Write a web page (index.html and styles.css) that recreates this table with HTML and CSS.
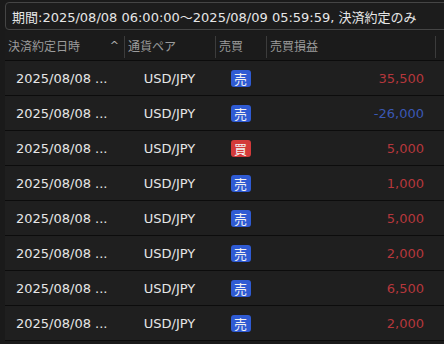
FILE: index.html
```html
<!DOCTYPE html>
<html lang="ja">
<head>
<meta charset="utf-8">
<link rel="stylesheet" href="styles.css">
</head>
<body>
<div class="filter">期間:2025/08/08 06:00:00～2025/08/09 05:59:59, 決済約定のみ</div>
<div class="table">
  <div class="row head">
    <div class="c c1"><span>決済約定日時</span><span class="sort">^</span></div>
    <div class="c c2">通貨ペア</div>
    <div class="c c3">売買</div>
    <div class="c c4">売買損益</div>
    <div class="c c5"></div>
  </div>
  <div class="row"><div class="c c1">2025/08/08 ...</div><div class="c c2">USD/JPY</div><div class="c c3"><span class="badge sell">売</span></div><div class="c c4 pos">35,500</div></div>
  <div class="row"><div class="c c1">2025/08/08 ...</div><div class="c c2">USD/JPY</div><div class="c c3"><span class="badge sell">売</span></div><div class="c c4 neg">-26,000</div></div>
  <div class="row"><div class="c c1">2025/08/08 ...</div><div class="c c2">USD/JPY</div><div class="c c3"><span class="badge buy">買</span></div><div class="c c4 pos">5,000</div></div>
  <div class="row"><div class="c c1">2025/08/08 ...</div><div class="c c2">USD/JPY</div><div class="c c3"><span class="badge sell">売</span></div><div class="c c4 pos">1,000</div></div>
  <div class="row"><div class="c c1">2025/08/08 ...</div><div class="c c2">USD/JPY</div><div class="c c3"><span class="badge sell">売</span></div><div class="c c4 pos">5,000</div></div>
  <div class="row"><div class="c c1">2025/08/08 ...</div><div class="c c2">USD/JPY</div><div class="c c3"><span class="badge sell">売</span></div><div class="c c4 pos">2,000</div></div>
  <div class="row"><div class="c c1">2025/08/08 ...</div><div class="c c2">USD/JPY</div><div class="c c3"><span class="badge sell">売</span></div><div class="c c4 pos">6,500</div></div>
  <div class="row"><div class="c c1">2025/08/08 ...</div><div class="c c2">USD/JPY</div><div class="c c3"><span class="badge sell">売</span></div><div class="c c4 pos">2,000</div></div>
</div>
</body>
</html>
```
FILE: styles.css
```css
html, body {
  margin: 0;
  padding: 0;
  background: #1a1a1a;
  overflow: hidden;
}
body {
  font-family: "DejaVu Sans", "Noto Sans CJK JP", sans-serif;
  font-size: 13px;
  color: #e6e6e6;
  width: 444px;
  height: 344px;
}
.filter {
  margin: 2px -10px 0 5px;
  height: 26px;
  border: 1px solid #454545;
  border-radius: 4px;
  background: #1c1c1c;
  padding-left: 6px;
  display: flex;
  align-items: center;
  white-space: nowrap;
}
.table {
  margin-left: 5px;
  margin-top: 1px;
}
.row {
  display: flex;
  height: 34px;
  align-items: center;
  border-bottom: 1px solid #0c0c0c;
  background: #1f1f1f;
  white-space: nowrap;
}
.row.head {
  height: 29px;
  background: #1b1b1b;
  color: #9c9c9c;
  font-size: 12px;
}
.c {
  box-sizing: border-box;
  height: 100%;
  display: flex;
  align-items: center;
}
.c1 { width: 119px; padding-left: 11px; }
.c2 { width: 91px; justify-content: center; }
.c3 { width: 51px; justify-content: center; }
.c4 { width: 169px; justify-content: flex-end; padding-right: 11px; }
.c5 { flex: 1; }
.head .c { position: relative; padding-left: 4px; justify-content: flex-start; }
.head .c1 { padding-left: 3px; justify-content: space-between; padding-right: 5px; }
.head .c2::before, .head .c3::before, .head .c4::before, .head .c5::before {
  content: "";
  position: absolute;
  left: 0;
  top: 5px;
  bottom: 2px;
  width: 1px;
  background: #3c3c3c;
}
.sort {
  font-size: 11px;
  color: #b0b0b0;
}
.badge {
  display: inline-flex;
  align-items: center;
  justify-content: center;
  width: 20px;
  height: 17px;
  border-radius: 3px;
  color: #f2f2f2;
  font-size: 13px;
}
.sell { background: #2f5bd3; }
.buy { background: #d33a3a; }
.pos { color: #b5373c; }
.neg { color: #3a58b4; }
```
